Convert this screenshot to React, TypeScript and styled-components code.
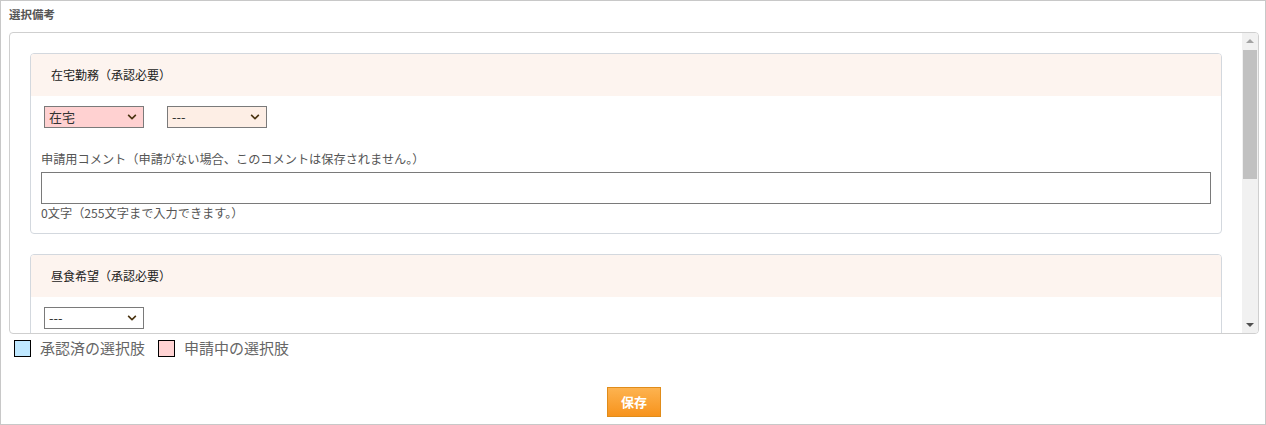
import React from "react";
import styled, { createGlobalStyle } from "styled-components";
import { FaChevronDown } from "react-icons/fa";

const Global = createGlobalStyle`
  html, body { margin: 0; padding: 0; background: #fff; }
  body { font-family: "Noto Sans CJK JP", "Noto Sans", sans-serif; color: #333; }
  * { box-sizing: border-box; }
`;

const Frame = styled.div`
  width: 1266px;
  height: 425px;
  border: 1px solid #c8c8c8;
  padding: 0 6px 0 8px;
  display: flex;
  flex-direction: column;
`;

const Title = styled.div`
  font-size: 11.5px;
  font-weight: bold;
  color: #555;
  line-height: 14px;
  padding: 6px 0 0 0;
  height: 31px;
  flex-shrink: 0;
`;

const ScrollBox = styled.div`
  height: 302px;
  flex-shrink: 0;
  border: 1px solid #cfcfcf;
  border-radius: 4px;
  overflow: hidden;
  display: flex;
`;

const ScrollContent = styled.div`
  flex: 1;
  min-width: 0;
  overflow-y: auto;
  scrollbar-width: none;
  padding: 20px;
  display: flex;
  flex-direction: column;
  gap: 20px;
`;

const ScrollBar = styled.div`
  width: 16px;
  flex-shrink: 0;
  background: #f1f1f1;
  display: flex;
  flex-direction: column;
`;

const ArrowButton = styled.div`
  height: 16px;
  display: flex;
  align-items: center;
  justify-content: center;
  flex-shrink: 0;
`;

const Track = styled.div`
  flex: 1;
  padding: 1px 1px 0 1px;
`;

const Thumb = styled.div`
  height: 129px;
  background: #c1c1c1;
`;

const Card = styled.div`
  border: 1px solid #d3d8de;
  border-radius: 4px;
  flex-shrink: 0;
`;

const CardHeader = styled.div`
  height: 42px;
  background: #fdf4ef;
  display: flex;
  align-items: center;
  padding-left: 20px;
  font-size: 12px;
  line-height: 16px;
  color: #222;
  border-radius: 3px 3px 0 0;
`;

const CardBody = styled.div`
  padding: 10px 10px 12px 10px;
  display: flex;
  flex-direction: column;
`;

const SelectRow = styled.div`
  display: flex;
  gap: 23px;
  padding-left: 3px;
  height: 22px;
`;

const SelectWrap = styled.div`
  position: relative;
  width: 100px;
  height: 22px;
`;

const Select = styled.select<{ $bg: string }>`
  display: block;
  appearance: none;
  width: 100px;
  height: 22px;
  border: 1px solid #7a7a7a;
  border-radius: 0;
  background: ${(p) => p.$bg};
  font-family: "Noto Sans CJK JP", sans-serif;
  font-size: 13px;
  line-height: 18px;
  color: #333;
  padding: 0 0 0 4px;
  margin: 0;
  outline: none;
`;

const ChevronBox = styled.span`
  position: absolute;
  right: 7px;
  top: 6px;
  display: flex;
  color: #4a3310;
  pointer-events: none;
`;

const Label = styled.div`
  font-size: 12.2px;
  color: #555;
  line-height: 16px;
  margin-top: 23px;
`;

const TextInput = styled.input`
  display: block;
  margin: 5px 0 0 0;
  width: 100%;
  height: 32px;
  border: 1px solid #7a7a7a;
  border-radius: 0;
  outline: none;
`;

const Count = styled.div`
  font-size: 12.2px;
  color: #555;
  line-height: 16px;
  margin-top: 1px;
`;

const Legend = styled.div`
  display: flex;
  align-items: center;
  height: 32px;
  flex-shrink: 0;
  padding: 6px 0 9px 5px;
  font-size: 15px;
  color: #666;
`;

const Swatch = styled.span<{ $c: string }>`
  width: 17px;
  height: 17px;
  flex-shrink: 0;
  border: 1px solid #000;
  background: ${(p) => p.$c};
  margin-right: 9px;
`;

const LegendText = styled.span`
  margin-right: 13px;
  line-height: 17px;
  margin-top: -3px;
  white-space: nowrap;
`;

const Footer = styled.div`
  display: flex;
  justify-content: center;
  padding-top: 21px;
  flex-shrink: 0;
`;

const SaveButton = styled.button`
  width: 54px;
  height: 30px;
  border: 1px solid #e08c1a;
  background: linear-gradient(#fdb350, #f7931c);
  color: #fff;
  font-family: "Noto Sans CJK JP", sans-serif;
  font-weight: bold;
  font-size: 13px;
  line-height: 18px;
  padding: 0;
  cursor: pointer;
`;

const ChevronIcon = () => (
  <ChevronBox>
    <FaChevronDown size={10} />
  </ChevronBox>
);

type Item = { title: string; first?: { value: string; bg: string }; second?: boolean };

const items: Item[] = [
  { title: "在宅勤務（承認必要）", first: { value: "在宅", bg: "#ffd1d1" }, second: true },
  { title: "昼食希望（承認必要）" },
  { title: "備考（承認必要）" },
];

const Section = ({ item }: { item: Item }) => (
  <Card>
    <CardHeader>{item.title}</CardHeader>
    <CardBody>
      <SelectRow>
        <SelectWrap>
          <Select $bg={item.first ? item.first.bg : "#fff"} defaultValue={item.first ? item.first.value : "---"}>
            <option>---</option>
            <option>在宅</option>
          </Select>
          <ChevronIcon />
        </SelectWrap>
        {item.second && (
          <SelectWrap>
            <Select $bg="#fdeee5" defaultValue="---">
              <option>---</option>
            </Select>
            <ChevronIcon />
          </SelectWrap>
        )}
      </SelectRow>
      <Label>申請用コメント（申請がない場合、このコメントは保存されません。）</Label>
      <TextInput type="text" />
      <Count>0文字（255文字まで入力できます。）</Count>
    </CardBody>
  </Card>
);

export default function App() {
  return (
    <>
      <Global />
      <Frame>
        <Title>選択備考</Title>
        <ScrollBox>
          <ScrollContent>
            {items.map((it) => (
              <Section key={it.title} item={it} />
            ))}
          </ScrollContent>
          <ScrollBar>
            <ArrowButton>
              <svg width="8" height="4" viewBox="0 0 8 4">
                <path d="M0 4 L4 0 L8 4 Z" fill="#a3a3a3" />
              </svg>
            </ArrowButton>
            <Track>
              <Thumb />
            </Track>
            <ArrowButton>
              <svg width="8" height="4" viewBox="0 0 8 4">
                <path d="M0 0 L4 4 L8 0 Z" fill="#505050" />
              </svg>
            </ArrowButton>
          </ScrollBar>
        </ScrollBox>
        <Legend>
          <Swatch $c="#bfe8ff" />
          <LegendText>承認済の選択肢</LegendText>
          <Swatch $c="#ffd3d3" />
          <LegendText>申請中の選択肢</LegendText>
        </Legend>
        <Footer>
          <SaveButton>保存</SaveButton>
        </Footer>
      </Frame>
    </>
  );
}
